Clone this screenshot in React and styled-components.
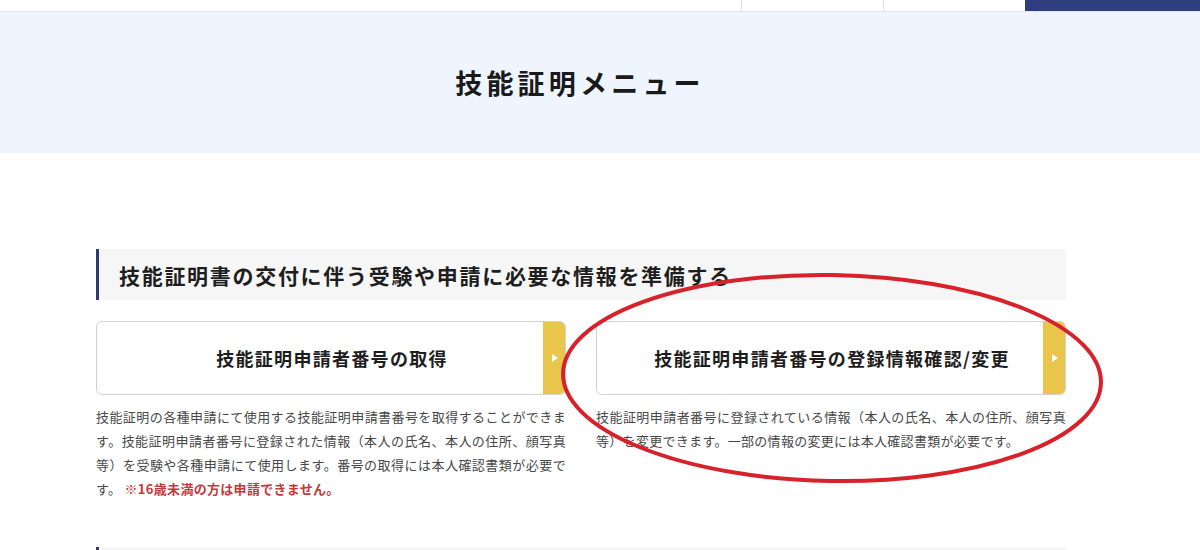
// App.jsx
import React from 'react';
import styled, { createGlobalStyle } from 'styled-components';

const GlobalStyle = createGlobalStyle`
  html, body {
    margin: 0;
    padding: 0;
    background: #ffffff;
    overflow: hidden;
  }
  body {
    font-family: "Noto Sans CJK JP", "Noto Sans", sans-serif;
    color: #222222;
  }
`;

const Page = styled.div`
  position: relative;
  width: 1200px;
  height: 550px;
  overflow: hidden;
`;

const TopBar = styled.div`
  height: 11px;
  display: flex;
  justify-content: flex-end;
  border-bottom: 1px solid #e4e4ec;
  background: #ffffff;
`;

const NavItem = styled.div`
  width: ${(p) => (p.$primary ? '175px' : '142px')};
  border-left: 1px solid ${(p) => (p.$primary ? '#2f3e7e' : '#e2e2e2')};
  background: ${(p) => (p.$primary ? '#2f3e7e' : 'transparent')};
  box-sizing: border-box;
`;

const Hero = styled.div`
  height: 141px;
  background: #eef5fe;
  display: flex;
  align-items: center;
  justify-content: center;
`;

const PageTitle = styled.h1`
  margin: 0 0 0 -40px;
  font-size: 27px;
  font-weight: 700;
  letter-spacing: 4.2px;
  color: #1a1a1a;
`;

const Main = styled.main`
  width: 970px;
  margin-left: 96px;
  padding-top: 96px;
`;

const Section = styled.section`
  margin-bottom: 46px;
`;

const SectionHeader = styled.h2`
  margin: 0;
  height: 51px;
  display: flex;
  align-items: center;
  padding-left: 20px;
  background: #f6f6f7;
  border-left: 3px solid #2f3b6e;
  font-size: 21px;
  font-weight: 700;
  letter-spacing: 1.7px;
  color: #1e1e1e;
`;

const CardGrid = styled.div`
  display: grid;
  grid-template-columns: repeat(2, 1fr);
  column-gap: 30px;
  margin-top: 21px;
`;

const MenuButton = styled.a`
  display: flex;
  height: 74px;
  box-sizing: border-box;
  border: 1px solid #d2d2d2;
  border-radius: 6px;
  overflow: hidden;
  background: #ffffff;
  text-decoration: none;
  color: #1e1e1e;
  cursor: pointer;
`;

const ButtonLabel = styled.span`
  flex: 1;
  display: flex;
  align-items: center;
  justify-content: center;
  padding-left: 24px;
  font-size: 18px;
  font-weight: 700;
  letter-spacing: 1.3px;
`;

const ArrowStrip = styled.span`
  width: 22px;
  background: #e9c54b;
  display: flex;
  align-items: center;
  justify-content: center;
`;

const Triangle = styled.span`
  width: 0;
  height: 0;
  border-top: 4px solid transparent;
  border-bottom: 4px solid transparent;
  border-left: 6px solid #ffffff;
  margin-left: 2px;
`;

const Description = styled.p`
  margin: 10px 0 0;
  font-size: 13px;
  line-height: 24px;
  letter-spacing: 0.3px;
  text-align: justify;
  color: #484848;
`;

const Caution = styled.span`
  color: #c4393b;
  font-weight: 700;
`;

const Annotation = styled.svg`
  position: absolute;
  top: 0;
  left: 0;
  pointer-events: none;
`;

const menus = [
  {
    label: '技能証明申請者番号の取得',
    text: '技能証明の各種申請にて使用する技能証明申請書番号を取得することができます。技能証明申請者番号に登録された情報（本人の氏名、本人の住所、顔写真等）を受験や各種申請にて使用します。番号の取得には本人確認書類が必要です。',
    caution: '※16歳未満の方は申請できません。',
  },
  {
    label: '技能証明申請者番号の登録情報確認/変更',
    text: '技能証明申請者番号に登録されている情報（本人の氏名、本人の住所、顔写真等）を変更できます。一部の情報の変更には本人確認書類が必要です。',
  },
];

function App() {
  return (
    <Page>
      <GlobalStyle />
      <TopBar>
        <NavItem />
        <NavItem />
        <NavItem $primary />
      </TopBar>
      <Hero>
        <PageTitle>技能証明メニュー</PageTitle>
      </Hero>
      <Main>
        <Section>
          <SectionHeader>技能証明書の交付に伴う受験や申請に必要な情報を準備する</SectionHeader>
          <CardGrid>
            {menus.map((menu) => (
              <div key={menu.label}>
                <MenuButton>
                  <ButtonLabel>{menu.label}</ButtonLabel>
                  <ArrowStrip>
                    <Triangle />
                  </ArrowStrip>
                </MenuButton>
                <Description>
                  {menu.text}
                  {menu.caution && <Caution>{'\u00a0' + menu.caution}</Caution>}
                </Description>
              </div>
            ))}
          </CardGrid>
        </Section>
        <Section>
          <SectionHeader />
        </Section>
      </Main>
      <Annotation width="1200" height="550" viewBox="0 0 1200 550">
        <ellipse
          cx="832"
          cy="378"
          rx="269"
          ry="103"
          fill="none"
          stroke="#d8222b"
          strokeWidth="4"
          transform="rotate(1 832 378)"
        />
      </Annotation>
    </Page>
  );
}

export default App;
